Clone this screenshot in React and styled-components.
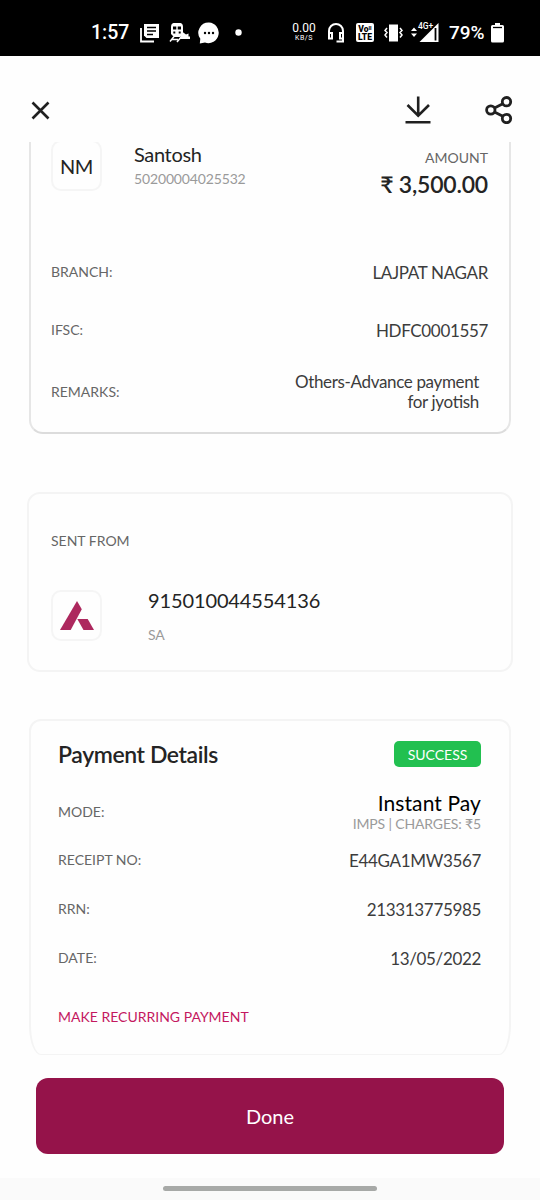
import React from "react";
import styled, { createGlobalStyle } from "styled-components";

const Global = createGlobalStyle`
  *, *::before, *::after { box-sizing: border-box; }
  body { margin: 0; background: #fefefe; }
  svg { display: block; flex: none; }
`;

const Screen = styled.div`
  width: 540px;
  height: 1200px;
  display: flex;
  flex-direction: column;
  overflow: hidden;
  background: #fefefe;
  color: #242424;
  font-family: Lato, "Liberation Sans", sans-serif;
  font-feature-settings: "liga" 1;
`;

const StatusBar = styled.header`
  height: 56px;
  flex: none;
  display: flex;
  align-items: center;
  padding: 9px 34px 0 91px;
  background: #000;
  color: #fff;
  font-family: Roboto, sans-serif;
`;

const Clock = styled.span`
  width: 49px;
  font-size: 19.5px;
  font-weight: 500;
  line-height: 24px;
`;

const Slot = styled.span`
  width: ${(p) => p.$w}px;
  flex: none;
  display: flex;
`;

const Speed = styled.span`
  flex: none;
  display: flex;
  flex-direction: column;
  align-items: center;
  width: 24px;
  margin-right: 11px;
  font-size: 12px;
  line-height: 11px;
  small { font-size: 7px; line-height: 8px; letter-spacing: 0.6px; }
`;

const Percent = styled.span`
  width: 42px;
  font-size: 19px;
  font-weight: 500;
  line-height: 24px;
  letter-spacing: -0.1px;
`;

const Toolbar = styled.nav`
  height: 86px;
  flex: none;
  display: flex;
  align-items: center;
  padding: 22px 27px 0 31px;
`;

const IconButton = styled.button`
  display: flex;
  padding: 0;
  border: 0;
  background: none;
  color: #202020;
  margin-left: ${(p) => p.$push || "0"};
`;

const Content = styled.main`
  height: 913px;
  flex: none;
  overflow: hidden;
  display: flex;
  flex-direction: column;
`;

const Card = styled.section`
  flex: none;
  display: flex;
  flex-direction: column;
  border: 2px solid #f4f4f4;
  border-radius: 13px;
`;

const PayeeCard = styled(Card)`
  height: 292px;
  margin: 0 29px 58px;
  padding: 0 21px 0 20px;
  border: 2px solid #e6e6e6;
  border-top: 0;
  border-bottom-color: #dcdcdc;
  border-radius: 0 0 14px 14px;
`;

const SourceCard = styled(Card)`
  height: 180px;
  margin: 0 27px 47px;
  padding: 37px 22px 0;
`;

const DetailsCard = styled(Card)`
  height: 336px;
  margin: 0 29px;
  padding: 12px 28px 0 27px;
  border-bottom-width: 1px;
  border-radius: 12px 12px 12px 12px / 12px 12px 30px 30px;
`;

const Payee = styled.div`
  height: 101px;
  display: flex;
  align-items: flex-start;
`;

const Avatar = styled.div`
  width: 51px;
  height: 51px;
  flex: none;
  margin: ${(p) => p.$margin};
  display: flex;
  align-items: center;
  justify-content: center;
  border: 2px solid #f5f5f5;
  border-radius: 10px;
  font-size: 20px;
  letter-spacing: -0.3px;
`;

const Column = styled.div`
  display: flex;
  flex-direction: column;
  align-items: ${(p) => (p.$end ? "flex-end" : "flex-start")};
  margin-top: ${(p) => p.$top || 0}px;
  margin-left: ${(p) => (p.$end ? "auto" : "0")};
`;

const Name = styled.span`
  font-size: 20px;
  line-height: 24px;
  letter-spacing: ${(p) => p.$track || 0}px;
`;

const Muted = styled.span`
  font-size: 14px;
  line-height: ${(p) => p.$line || 20}px;
  letter-spacing: -0.15px;
  color: #9a9a9a;
`;

const Label = styled.span`
  font-size: 14px;
  line-height: 20px;
  color: #666;
`;

const Amount = styled.strong`
  font-size: 23px;
  line-height: 32px;
  font-weight: 600;
  letter-spacing: -0.2px;
`;

const Row = styled.div`
  height: ${(p) => p.$h}px;
  flex: none;
  display: flex;
  align-items: center;
  justify-content: space-between;
  padding-top: ${(p) => p.$top || 0}px;
`;

const Value = styled.span`
  padding-top: 2px;
  font-size: 17px;
  line-height: 20px;
  letter-spacing: -0.34px;
  color: #3c3c3c;
  text-align: right;
`;

const Remarks = styled(Value)`
  padding: 0 9px 0 0;
  white-space: pre-line;
`;

const Source = styled.div`
  display: flex;
  margin-top: 38px;
`;

const Title = styled.h2`
  margin: 0;
  font-size: 23px;
  line-height: 30px;
  font-weight: 600;
  letter-spacing: -0.4px;
`;

const Badge = styled.span`
  width: 87px;
  height: 26px;
  display: flex;
  align-items: center;
  justify-content: center;
  border-radius: 5px;
  background: #22c050;
  color: #fff;
  font-size: 14px;
`;

const Mode = styled.span`
  font-size: 21px;
  line-height: 24px;
  letter-spacing: 0.1px;
  color: #000;
`;

const Link = styled.a`
  margin-top: 25px;
  font-size: 14px;
  line-height: 20px;
  color: #c4185f;
`;

const Done = styled.button`
  height: 76px;
  flex: none;
  margin: 23px 36px 24px;
  border: 0;
  border-radius: 12px;
  background: #95134a;
  color: #fff;
  font: 20px Lato, sans-serif;
`;

const GestureBar = styled.footer`
  flex: 1;
  display: flex;
  justify-content: center;
  padding-top: 8px;
  background: #fafafa;
  &::after {
    content: "";
    width: 214px;
    height: 5px;
    border-radius: 3px;
    background: #a7a9a7;
  }
`;

const NewsIcon = () => (
  <svg width="19" height="20" viewBox="0 0 19 20">
    <path d="M1 5v13.5h13" fill="none" stroke="#fff" strokeWidth="1.8" />
    <path d="M4 1h15v14H6.5L4 12.5z" fill="#fff" />
    <path d="M7 4.5h9M7 8h9M7 11.5h6" stroke="#000" strokeWidth="1.4" />
  </svg>
);

const TrainIcon = () => (
  <svg width="21" height="20" viewBox="0 0 21 20">
    <path d="M4.5 0h7Q14 .5 14 4v7l-3 3H5l-3-3V4Q2 .5 4.5 0z" fill="#fff" />
    <path d="M4 3.500h3.300v3H4zM8.700 3.500H12v3H8.700zM4.300 8.500h2v2h-2zM9.700 8.500h2v2h-2z" fill="#000" />
    <path d="M5 13.500l-4 5M13 13l-5 6M3 16.500h6" stroke="#fff" strokeWidth="1.500" />
    <path d="M13 8.500l4 3 2.500-1v3H21V16H11l1-4z" fill="#fff" />
  </svg>
);

const ChatIcon = () => (
  <svg width="22" height="22" viewBox="0 0 22 22">
    <path d="M11 .5a10.300 10.300 0 1 1-4 20L1.800 21.500 2.300 16.800A10.300 10.300 0 0 1 11 .5z" fill="#fff" />
    <g fill="#000"><circle cx="7" cy="11" r="1.200" /><circle cx="11" cy="11" r="1.200" /><circle cx="15" cy="11" r="1.200" /></g>
  </svg>
);

const DotIcon = () => (
  <svg width="7" height="7" viewBox="0 0 7 7"><circle cx="3.500" cy="3.500" r="3.200" fill="#fff" /></svg>
);

const HeadsetIcon = () => (
  <svg width="18" height="20" viewBox="0 0 18 20" fill="none" stroke="#fff" strokeWidth="2">
    <path d="M2 11V8a7 7 0 0 1 14 0v10.500H9.500" />
    <path d="M2 10h3v5.500H2zM13 10h3v5.500h-3z" />
  </svg>
);

const LteGlyph = styled.span`
  width: 18px;
  height: 19px;
  display: flex;
  flex-direction: column;
  align-items: center;
  justify-content: center;
  border-radius: 2px;
  background: #fff;
  color: #000;
  font-size: 8.5px;
  font-weight: 900;
  line-height: 8px;
`;

const VibrateIcon = () => (
  <svg width="19" height="18" viewBox="0 0 19 18" fill="none" stroke="#fff" strokeWidth="1.500">
    <path d="M5 .5h9v17H5z" fill="#fff" stroke="none" />
    <path d="M3 4L1 6.500l2 2-2 2.500 2 2.500M16 4l2 2.500-2 2 2 2.500-2 2.500" />
  </svg>
);

const SignalIcon = () => (
  <svg width="28" height="21" viewBox="0 0 28 21">
    <path d="M0 9l3-3.500L6 9zM0 11.500h6L3 15z" fill="#fff" />
    <path d="M8.500 20L27.500 1v19z" fill="#fff" />
    <path d="M24.500 6v12.500" stroke="#000" strokeWidth="1.800" />
    <path d="M7 0h14.500v6.500L17 9H7z" fill="#000" />
    <text x="7" y="7.300" fill="#fff" fontFamily="Roboto" fontSize="8.500" fontWeight="500">4G+</text>
  </svg>
);

const BatteryIcon = () => (
  <svg width="13" height="20" viewBox="0 0 13 20">
    <path d="M4 0h5v2h2.500Q13 2 13 3.500V18q0 1.500-1.500 1.500h-10Q0 19.500 0 18V3.500Q0 2 1.500 2H4z" fill="#fff" />
    <path d="M2 4.500h9" stroke="#000" strokeWidth="1.300" />
  </svg>
);

const CloseIcon = () => (
  <svg width="19" height="19" viewBox="0 0 19 19" stroke="currentColor" strokeWidth="2.600">
    <path d="M1.500 1.500l16 16M17.500 1.500l-16 16" />
  </svg>
);

const DownloadIcon = () => (
  <svg width="26" height="28" viewBox="0 0 26 28" fill="none" stroke="currentColor" strokeWidth="2.600">
    <path d="M13.200 .5v19.500M2.500 9l10.700 10.700L24 9M.5 26.300h25" />
  </svg>
);

const ShareIcon = () => (
  <svg width="28" height="28" viewBox="0 0 28 28" fill="none" stroke="currentColor" strokeWidth="2.800">
    <circle cx="5.800" cy="14" r="4.200" />
    <circle cx="21.500" cy="5.700" r="4.200" />
    <circle cx="21.500" cy="22.500" r="4.200" />
    <path d="M9.500 12l8.300-4.300M9.500 16l8.300 4.300" />
  </svg>
);

const BankLogo = () => (
  <svg width="34" height="29" viewBox="0 0 34 29" fill="#ad285e">
    <path d="M17 0l4.800 8.200L10.700 29H0z" />
    <path d="M17.300 18h10.400L34 29H23.500z" />
  </svg>
);

export default function App() {
  return (
    <Screen>
      <Global />
      <StatusBar>
        <Clock>1:57</Clock>
        <Slot $w={29}><NewsIcon /></Slot>
        <Slot $w={29}><TrainIcon /></Slot>
        <Slot $w={37}><ChatIcon /></Slot>
        <Slot $w={57}><DotIcon /></Slot>
        <Speed>0.00<small>KB/S</small></Speed>
        <Slot $w={29}><HeadsetIcon /></Slot>
        <Slot $w={28}><LteGlyph><span>Voᴵᴵ</span><span>LTE</span></LteGlyph></Slot>
        <Slot $w={27}><VibrateIcon /></Slot>
        <Slot $w={38}><SignalIcon /></Slot>
        <Percent>79%</Percent>
        <BatteryIcon />
      </StatusBar>

      <Toolbar>
        <IconButton aria-label="Close"><CloseIcon /></IconButton>
        <IconButton aria-label="Download" $push="auto"><DownloadIcon /></IconButton>
        <IconButton aria-label="Share" $push="54px"><ShareIcon /></IconButton>
      </Toolbar>

      <Content>
        <PayeeCard>
          <Payee>
            <Avatar $margin="-2px 32px 0 0">NM</Avatar>
            <Column>
              <Name $track={-0.35}>Santosh</Name>
              <Muted $line={26}>50200004025532</Muted>
            </Column>
            <Column $end $top={6}>
              <Label>AMOUNT</Label>
              <Amount>₹ 3,500.00</Amount>
            </Column>
          </Payee>
          <Row $h={58}><Label>BRANCH:</Label><Value>LAJPAT NAGAR</Value></Row>
          <Row $h={58}><Label>IFSC:</Label><Value>HDFC0001557</Value></Row>
          <Row $h={66}>
            <Label>REMARKS:</Label>
            <Remarks>{"Others-Advance payment\nfor jyotish"}</Remarks>
          </Row>
        </PayeeCard>

        <SourceCard>
          <Label>SENT FROM</Label>
          <Source>
            <Avatar $margin="1px 46px 0 0"><BankLogo /></Avatar>
            <Column $top={-1}>
              <Name $track={-0.12}>915010044554136</Name>
              <Muted $line={45}>SA</Muted>
            </Column>
          </Source>
        </SourceCard>

        <DetailsCard>
          <Row $h={42}><Title>Payment Details</Title><Badge>SUCCESS</Badge></Row>
          <Row $h={60} $top={14}>
            <Label>MODE:</Label>
            <Column $end>
              <Mode>Instant Pay</Mode>
              <Muted $line={18}>IMPS | CHARGES: ₹5</Muted>
            </Column>
          </Row>
          <Row $h={49}><Label>RECEIPT NO:</Label><Value>E44GA1MW3567</Value></Row>
          <Row $h={49}><Label>RRN:</Label><Value>213313775985</Value></Row>
          <Row $h={49}><Label>DATE:</Label><Value>13/05/2022</Value></Row>
          <Link>MAKE RECURRING PAYMENT</Link>
        </DetailsCard>
      </Content>

      <Done>Done</Done>
      <GestureBar />
    </Screen>
  );
}
